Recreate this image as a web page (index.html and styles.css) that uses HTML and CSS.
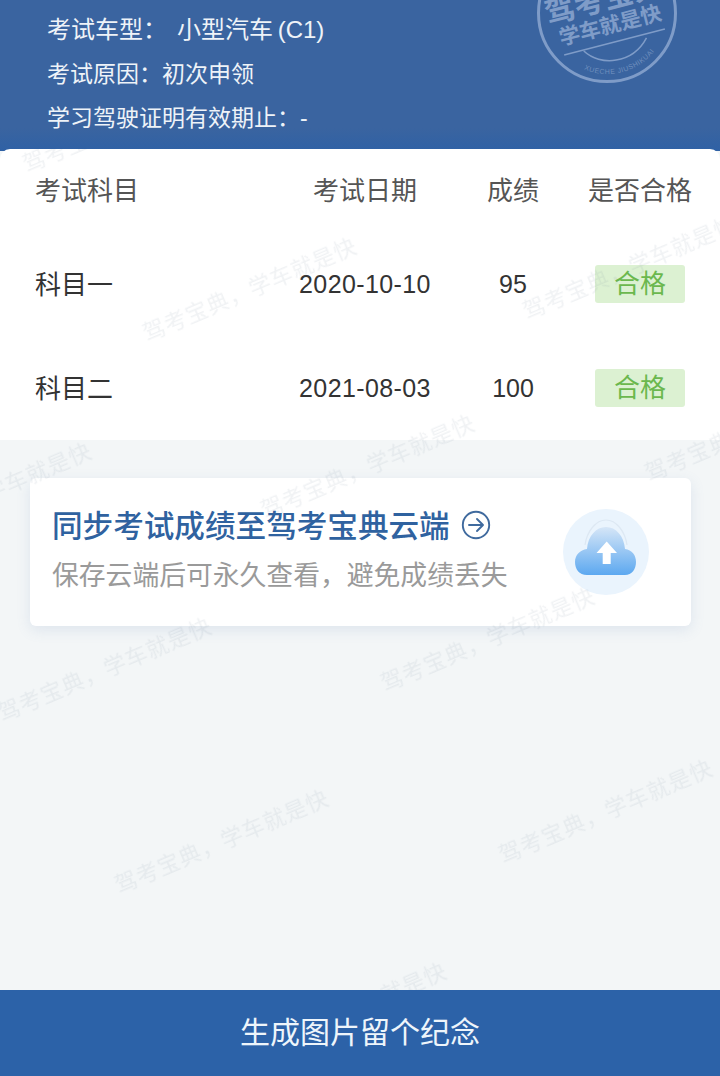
FILE: index.html
```html
<!DOCTYPE html>
<html lang="zh-CN">
<head>
  <meta charset="utf-8">
  <title>考试成绩</title>
  <link rel="stylesheet" href="styles.css">
</head>
<body>
  <div class="page">
    <div class="header">
      <div class="infoLine infoFirst"><span>考试车型：</span><span class="infoValue">小型汽车 (C1)</span></div>
      <div class="infoLine">考试原因：初次申领</div>
      <div class="infoLine">学习驾驶证明有效期止：-</div>

      <svg class="stamp" width="144" height="144" viewBox="0 0 144 144">
        <defs>
          <path id="stampCurve" d="M20 103A60 60 0 0 0 124 103"/>
        </defs>
        <circle cx="72" cy="72" r="68.5" fill="none" stroke="#7f9cc8" stroke-width="3"/>
        <g transform="rotate(-14.5 72 72)">
          <text class="stampBig" x="72" y="68" text-anchor="middle">驾考宝典</text>
          <text class="stampMid" x="72" y="92" text-anchor="middle">学车就是快</text>
          <path d="M20 102H124" fill="none" stroke="#7f9cc8" stroke-width="1.5"/>
          <path d="M40 103C52 122 84 128 104 106" fill="none" stroke="#7f9cc8" stroke-width="1.5"/>
          <text class="stampSmall" text-anchor="middle"><textPath href="#stampCurve" startOffset="50%">XUECHE JIUSHIKUAI</textPath></text>
        </g>
      </svg>
    </div>

    <div class="scoreSheet">
      <div class="scoreRow scoreHead">
        <div class="rowName">考试科目</div>
        <div class="cell">考试日期</div>
        <div class="cell">成绩</div>
        <div class="cell">是否合格</div>
      </div>
      <div class="scoreRow">
        <div class="rowName">科目一</div>
        <div class="cell num date">2020-10-10</div>
        <div class="cell num">95</div>
        <div class="cell"><span class="passBadge">合格</span></div>
      </div>
      <div class="scoreRow">
        <div class="rowName">科目二</div>
        <div class="cell num date">2021-08-03</div>
        <div class="cell num">100</div>
        <div class="cell"><span class="passBadge">合格</span></div>
      </div>
    </div>

    <div class="content">
      <div class="syncCard">
        <div class="syncText">
          <div class="syncTitle">
            <span>同步考试成绩至驾考宝典云端</span>
            <svg class="arrowIcon" width="30" height="30" viewBox="0 0 30 30">
              <circle cx="15" cy="15" r="13.2" fill="none" stroke="#3f6a9e" stroke-width="1.9"/>
              <path d="M8 15H21.5M16 9L22 15L16 21" fill="none" stroke="#3f6a9e" stroke-width="1.9" stroke-linecap="round" stroke-linejoin="round"/>
            </svg>
          </div>
          <div class="syncSub">保存云端后可永久查看，避免成绩丢失</div>
        </div>
        <div class="cloudBadge">
          <svg width="86" height="86" viewBox="0 0 86 86">
            <defs>
              <linearGradient id="cloudFill" x1="0" y1="0" x2="0" y2="1">
                <stop offset="0" stop-color="#d6e6f7"/>
                <stop offset="1" stop-color="#5ca8f0"/>
              </linearGradient>
            </defs>
            <path d="M22 36C24 22 33 11 43 11C53 11 62 22 64 36" fill="none" stroke="#dde8f3" stroke-width="1.2"/>
            <path d="M24 66C16 66 12 60 12 53C12 46 17 41 24 40C25 27 33 18 43 18C53 18 61 27 62 40C69 41 73 46 73 53C73 60 69 66 62 66Z" fill="url(#cloudFill)"/>
            <path d="M43.7 32.5L54 44H47.7V55H39.7V44H33.5Z" fill="#fff"/>
          </svg>
        </div>
      </div>
    </div>

    <div class="footerBar">生成图片留个纪念</div>

    <div class="marks">
      <span class="mark mark1">驾考宝典，学车就是快</span>
      <span class="mark mark2">驾考宝典，学车就是快</span>
      <span class="mark mark3">驾考宝典，学车就是快</span>
      <span class="mark mark4">驾考宝典，学车就是快</span>
      <span class="mark mark5">驾考宝典，学车就是快</span>
      <span class="mark mark6">驾考宝典，学车就是快</span>
      <span class="mark mark7">驾考宝典，学车就是快</span>
      <span class="mark mark8">驾考宝典，学车就是快</span>
      <span class="mark mark9">驾考宝典，学车就是快</span>
      <span class="mark mark10">驾考宝典，学车就是快</span>
      <span class="mark mark11">驾考宝典，学车就是快</span>
    </div>
  </div>
</body>
</html>
```

FILE: styles.css
```css
html, body {
  margin: 0;
  padding: 0;
}

body {
  font-family: "Liberation Sans", "Noto Sans CJK SC", sans-serif;
  background-color: #f3f6f7;
}

.page {
  position: relative;
  display: flex;
  flex-direction: column;
  width: 720px;
  height: 1076px;
  overflow: hidden;
}

/* top blue part */
.header {
  position: relative;
  height: 151px;
  margin-bottom: -2px;
  padding: 8px 0 0 47px;
  box-sizing: border-box;
  background: linear-gradient(#3a64a0 85%, #2f61a5);
  color: #eef3f8;
  overflow: hidden;
}

.infoLine {
  height: 44px;
  line-height: 44px;
  font-size: 23px;
}

.infoFirst {
  display: flex;
  font-size: 24px;
}

.infoValue {
  margin-left: 10px;
  word-spacing: -2px;
}

.stamp {
  position: absolute;
  left: 535px;
  top: -59px;
}

.stampBig {
  font-size: 30px;
  font-weight: 700;
  fill: #7f9cc8;
}

.stampMid {
  font-size: 21px;
  font-weight: 700;
  fill: #7f9cc8;
}

.stampSmall {
  font-size: 7px;
  letter-spacing: 0.5px;
  fill: #6f8fbe;
}

/* score table */
.scoreSheet {
  position: relative;
  background-color: #fff;
  border-radius: 10px 10px 0 0;
  color: #333;
}

.scoreRow {
  display: grid;
  grid-template-columns: 244px 170px 126px 128px;
  align-items: center;
  height: 104px;
  padding-left: 35px;
  font-size: 26px;
}

.scoreHead {
  height: 83px;
  padding-bottom: 4px;
  box-sizing: border-box;
  color: #555;
}

.rowName {
  padding-bottom: 4px;
}

.scoreHead .rowName {
  padding-bottom: 0;
}

.cell {
  text-align: center;
  white-space: nowrap;
  transform: translateX(1px);
}

.num {
  font-size: 25px;
}

.date {
  letter-spacing: 0.4px;
}

.passBadge {
  display: block;
  width: 90px;
  height: 38px;
  line-height: 38px;
  margin: 0 auto;
  border-radius: 3px;
  background-color: #dcf1d2;
  color: #6bb84e;
}

/* sync card */
.content {
  flex: 1;
  padding: 38px 29px 0 30px;
}

.syncCard {
  display: flex;
  align-items: center;
  justify-content: space-between;
  height: 148px;
  padding: 0 42px 0 22px;
  box-sizing: border-box;
  background-color: #fff;
  border-radius: 6px;
  box-shadow: 0 4px 14px rgba(110, 145, 190, 0.16);
}

.syncText {
  margin-bottom: 7px;
}

.syncTitle {
  display: flex;
  align-items: center;
  height: 40px;
  font-size: 30.6px;
  font-weight: 500;
  color: #2f62a0;
  white-space: nowrap;
}

.arrowIcon {
  margin: 2px 0 0 11px;
}

.syncSub {
  margin-top: 10px;
  font-size: 26.8px;
  color: #9a9a9a;
  white-space: nowrap;
}

.cloudBadge {
  width: 86px;
  height: 86px;
  border-radius: 50%;
  background-color: #eaf4fd;
}

/* bottom button */
.footerBar {
  position: relative;
  z-index: 2;
  height: 86px;
  line-height: 86px;
  text-align: center;
  font-size: 30px;
  color: #eef5fb;
  background-color: #2c62a8;
}

/* watermark layer over the sheet and the card */
.marks {
  position: absolute;
  left: 0;
  top: 149px;
  right: 0;
  bottom: 0;
  overflow: hidden;
  pointer-events: none;
}

.mark {
  position: absolute;
  width: 240px;
  margin: -15px 0 0 -120px;
  line-height: 30px;
  text-align: center;
  font-size: 22px;
  letter-spacing: 1px;
  white-space: nowrap;
  color: rgba(105, 125, 150, 0.1);
  transform: rotate(-23deg);
  filter: blur(0.6px);
}

.mark1 { left: 130px; top: -28px; }
.mark2 { left: 250px; top: 141px; }
.mark3 { left: 630px; top: 119px; }
.mark4 { left: 368px; top: 318px; }
.mark5 { left: -15px; top: 346px; }
.mark6 { left: 752px; top: 281px; }
.mark7 { left: 488px; top: 491px; }
.mark8 { left: 105px; top: 521px; }
.mark9 { left: 222px; top: 693px; }
.mark10 { left: 606px; top: 663px; }
.mark11 { left: 340px; top: 866px; }
```
